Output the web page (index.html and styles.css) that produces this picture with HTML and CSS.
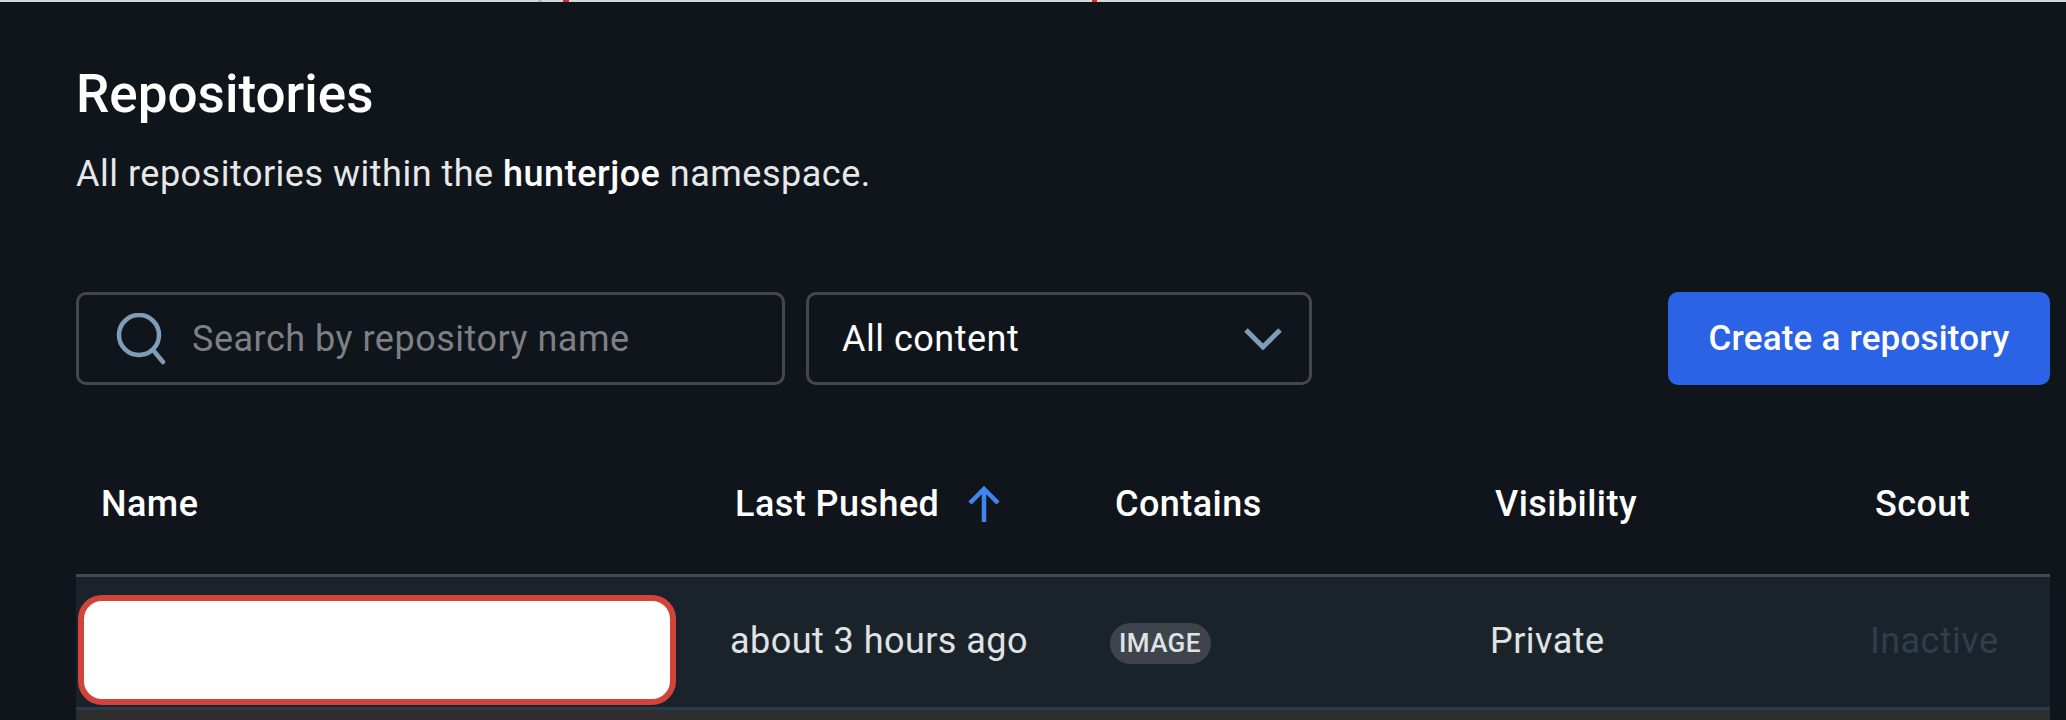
FILE: index.html
```html
<!DOCTYPE html>
<html lang="en">
<head>
  <meta charset="UTF-8">
  <meta name="viewport" content="width=device-width, initial-scale=1.0">
  <title>Repositories</title>
  <link rel="stylesheet" href="styles.css">
</head>
<body>
  <div class="top-strip">
    <span class="tick tick-gray"></span>
    <span class="tick tick-red"></span>
    <span class="tick tick-red-2"></span>
  </div>
  <div class="page">
    <h1 class="title">Repositories</h1>
    <p class="subtitle">All repositories within the <strong>hunterjoe</strong> namespace.</p>

    <div class="toolbar">
      <div class="search">
        <svg class="search-icon" viewBox="0 0 52 52" fill="none">
          <circle cx="23" cy="22" r="20" stroke="#7f9db8" stroke-width="4.5"/>
          <path d="M37 37L47 49" stroke="#7f9db8" stroke-width="4.5" stroke-linecap="round"/>
        </svg>
        <span class="search-text">Search by repository name</span>
      </div>
      <div class="select">
        <span>All content</span>
        <svg class="chevron" viewBox="0 0 38 22" fill="none">
          <path d="M2 2L19 19L36 2" stroke="#7f9db8" stroke-width="5"/>
        </svg>
      </div>
      <button class="create-btn">Create a repository</button>
    </div>

    <div class="table">
      <div class="row head">
        <div class="cell name-head">Name</div>
        <div class="cell">Last Pushed
          <svg class="sort-arrow" viewBox="0 0 34 36" fill="none">
            <path d="M17 36V3M3 17L17 3L31 17" stroke="#3f84f0" stroke-width="4.5"/>
          </svg>
        </div>
        <div class="cell">Contains</div>
        <div class="cell">Visibility</div>
        <div class="cell">Scout</div>
      </div>
      <div class="row body-row">
        <div class="cell"><div class="redacted"></div></div>
        <div class="cell">about 3 hours ago</div>
        <div class="cell"><span class="badge">IMAGE</span></div>
        <div class="cell">Private</div>
        <div class="cell inactive">Inactive</div>
      </div>
      <div class="next-row"></div>
    </div>
  </div>
</body>
</html>
```

FILE: styles.css
```css
html, body {
  margin: 0;
  height: 100%;
  overflow: hidden;
}

body {
  font-family: Roboto, "Liberation Sans", sans-serif;
  background-color: #10151c;
  color: #fff;
}

.top-strip {
  position: relative;
  height: 2px;
  background-color: #d8d8d8;
}

.tick {
  position: absolute;
  top: 0;
  height: 2px;
}

.tick-gray { left: 538px; width: 4px; background-color: #bbb; }
.tick-red { left: 563px; width: 6px; background-color: #c9302c; }
.tick-red-2 { left: 1092px; width: 5px; background-color: #c9302c; }

.page {
  padding: 0 16px 0 76px;
}

.title {
  margin: 0;
  padding-top: 62px;
  font-size: 53px;
  line-height: 60px;
  font-weight: 500;
}

.subtitle {
  margin: 30px 0 0;
  font-size: 36px;
  line-height: 40px;
  letter-spacing: 0.5px;
  color: #e6e8ea;
}

.subtitle strong {
  font-weight: 500;
  color: #fff;
}

.toolbar {
  display: flex;
  align-items: stretch;
  height: 93px;
  margin-top: 98px;
}

.search, .select {
  display: flex;
  align-items: center;
  box-sizing: border-box;
  border: 3px solid #45474b;
  border-radius: 10px;
  font-size: 36px;
  letter-spacing: 0.5px;
}

.search {
  width: 709px;
  padding-left: 37px;
}

.search-icon {
  width: 52px;
  height: 52px;
  margin-right: 24px;
}

.search-text {
  color: #7d8084;
}

.select {
  width: 506px;
  margin-left: 21px;
  padding: 0 27px 0 33px;
  justify-content: space-between;
}

.chevron {
  width: 38px;
  height: 22px;
}

.create-btn {
  width: 382px;
  margin-left: auto;
  border: 0;
  border-radius: 10px;
  background-color: #2b63e6;
  color: #fff;
  font-family: inherit;
  font-size: 35px;
  font-weight: 500;
  letter-spacing: 0.2px;
}

.row {
  display: grid;
  grid-template-columns: 654px 380px 380px 380px 180px;
}

.head {
  box-sizing: border-box;
  height: 100px;
  margin-top: 92px;
  padding-bottom: 44px;
  align-items: center;
  border-bottom: 3px solid #47494d;
  font-size: 36px;
  font-weight: 500;
  letter-spacing: 0.45px;
}

.head .cell {
  padding-left: 5px;
}

.head .name-head {
  padding-left: 25px;
}

.sort-arrow {
  width: 34px;
  height: 36px;
  margin-left: 18px;
  vertical-align: -6px;
}

.body-row {
  box-sizing: border-box;
  height: 133px;
  align-items: center;
  background-color: #1b232a;
  border-bottom: 3px solid #2b3a4a;
  font-size: 36px;
  letter-spacing: 0.45px;
  color: #e0e3e6;
}

.body-row .cell {
  padding-bottom: 2px;
}

.redacted {
  box-sizing: border-box;
  width: 598px;
  height: 110px;
  margin: 18px 0 0 2px;
  background-color: #fff;
  border: 6px solid #d2443b;
  border-radius: 24px;
}

.badge {
  display: inline-block;
  margin-top: -2px;
  padding: 0 10px 0 9px;
  border-radius: 21px;
  background-color: #3d444b;
  font-size: 26px;
  line-height: 41px;
  font-weight: 500;
  letter-spacing: 0.4px;
}

.inactive {
  color: #2f3e4d;
}

.next-row {
  height: 12px;
  background-color: #2d2d2d;
}
```
